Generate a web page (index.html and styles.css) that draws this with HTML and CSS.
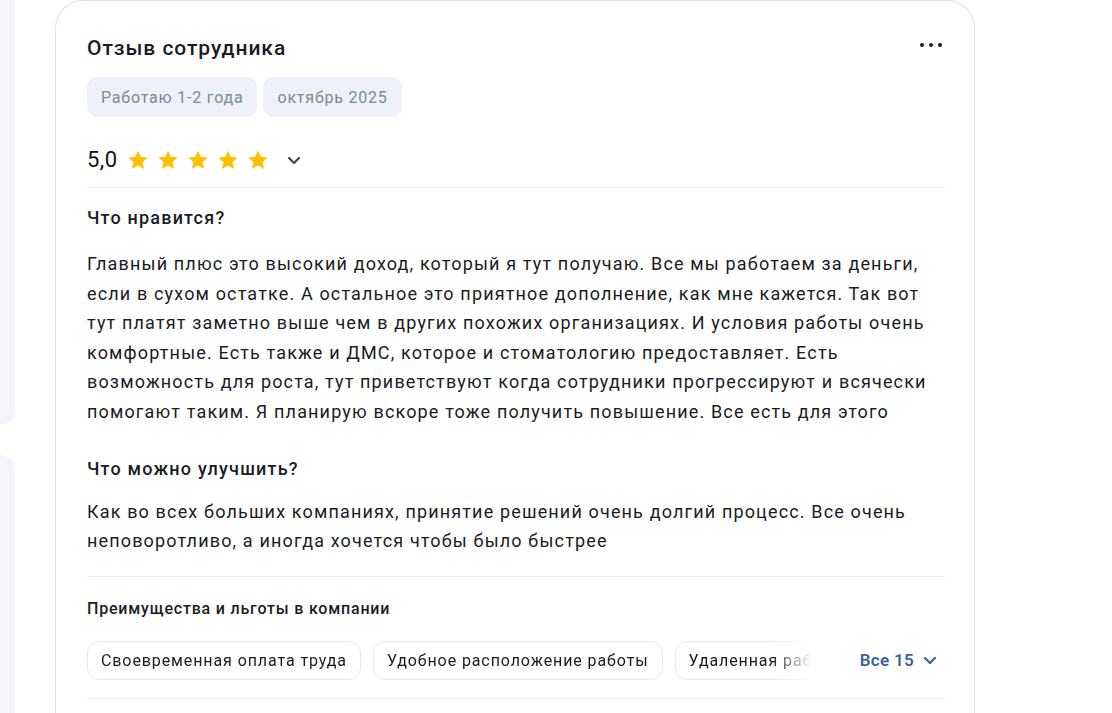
FILE: index.html
```html
<!DOCTYPE html>
<html lang="ru">
<head>
<meta charset="utf-8">
<link rel="stylesheet" href="styles.css">
</head>
<body>
<div class="page">
  <div class="side">
    <div class="side-panel p1"></div>
    <div class="side-panel p2"></div>
  </div>
  <div class="card">
    <div class="head">
      <h2 class="title">Отзыв сотрудника</h2>
      <div class="more"><span></span><span></span><span></span></div>
    </div>
    <div class="tags">
      <span class="tag">Работаю 1-2 года</span>
      <span class="tag">октябрь 2025</span>
    </div>
    <div class="rating">
      <span class="score">5,0</span>
      <div class="stars">
        <svg class="star" viewBox="0 0 24 24"><path d="M12 1.8l3.1 6.9 7.4.7-5.6 5 1.7 7.3L12 17.9l-6.6 3.8 1.7-7.3-5.6-5 7.4-.7z"/></svg>
        <svg class="star" viewBox="0 0 24 24"><path d="M12 1.8l3.1 6.9 7.4.7-5.6 5 1.7 7.3L12 17.9l-6.6 3.8 1.7-7.3-5.6-5 7.4-.7z"/></svg>
        <svg class="star" viewBox="0 0 24 24"><path d="M12 1.8l3.1 6.9 7.4.7-5.6 5 1.7 7.3L12 17.9l-6.6 3.8 1.7-7.3-5.6-5 7.4-.7z"/></svg>
        <svg class="star" viewBox="0 0 24 24"><path d="M12 1.8l3.1 6.9 7.4.7-5.6 5 1.7 7.3L12 17.9l-6.6 3.8 1.7-7.3-5.6-5 7.4-.7z"/></svg>
        <svg class="star" viewBox="0 0 24 24"><path d="M12 1.8l3.1 6.9 7.4.7-5.6 5 1.7 7.3L12 17.9l-6.6 3.8 1.7-7.3-5.6-5 7.4-.7z"/></svg>
      </div>
      <svg class="chev" viewBox="0 0 16 16"><path d="M3 6l5 5 5-5" fill="none" stroke="#3d3f45" stroke-width="2" stroke-linecap="round" stroke-linejoin="round"/></svg>
    </div>
    <div class="divider d1"></div>
    <h3 class="sub s1">Что нравится?</h3>
    <p class="text t1">Главный плюс это высокий доход, который я тут получаю. Все мы работаем за деньги, если в сухом остатке. А остальное это приятное дополнение, как мне кажется. Так вот тут платят заметно выше чем в других похожих организациях. И условия работы очень комфортные. Есть также и ДМС, которое и стоматологию предоставляет. Есть возможность для роста, тут приветствуют когда сотрудники прогрессируют и всячески помогают таким. Я планирую вскоре тоже получить повышение. Все есть для этого</p>
    <h3 class="sub s2">Что можно улучшить?</h3>
    <p class="text t2">Как во всех больших компаниях, принятие решений очень долгий процесс. Все очень неповоротливо, а иногда хочется чтобы было быстрее</p>
    <div class="divider d2"></div>
    <h4 class="perks-title">Преимущества и льготы в компании</h4>
    <div class="perks">
      <div class="chips">
        <span class="chip">Своевременная оплата труда</span>
        <span class="chip">Удобное расположение работы</span>
        <span class="chip">Удаленная работа</span>
      </div>
      <div class="all">Все 15
        <svg class="chev-blue" viewBox="0 0 16 16"><path d="M3 6l5 5 5-5" fill="none" stroke="#3a62a6" stroke-width="2.2" stroke-linecap="round" stroke-linejoin="round"/></svg>
      </div>
    </div>
    <div class="divider d3"></div>
  </div>
</div>
</body>
</html>
```

FILE: styles.css
```css
* { box-sizing: border-box; }
html, body { margin: 0; padding: 0; background: #ffffff; }
body {
  font-family: Roboto, "Noto Sans", "Liberation Sans", sans-serif;
  color: #1b1c1f;
  width: 1112px;
  height: 713px;
  overflow: hidden;
}
.page {
  display: flex;
  align-items: flex-start;
  height: 713px;
  overflow: hidden;
}
.side {
  width: 15px;
  flex: none;
  display: flex;
  flex-direction: column;
  gap: 30px;
  height: 713px;
}
.side-panel {
  background: #f4f5fa;
  width: 15px;
}
.p1 { height: 425px; border-radius: 0 0 15px 0; }
.p2 { flex: 1; border-radius: 0 15px 0 0; }
.card {
  margin-left: 40px;
  width: 920px;
  height: 713px;
  border: 1px solid #dde2ea;
  border-bottom: none;
  border-radius: 28px 28px 0 0;
  padding: 35px 29px 0 31px;
  flex: none;
  overflow: hidden;
}
.head {
  display: flex;
  align-items: center;
  justify-content: space-between;
  height: 24px;
}
.title {
  margin: 0;
  font-size: 21px;
  letter-spacing: 0.95px;
  line-height: 24px;
  font-weight: 500;
  color: #1b1c1f;
}
.more {
  display: flex;
  gap: 4.5px;
  padding-right: 3px;
  margin-top: -6px;
}
.more span {
  width: 4.5px;
  height: 4.5px;
  border-radius: 50%;
  background: #1b1c1f;
}
.tags {
  display: flex;
  gap: 6px;
  margin-top: 17px;
}
.tag {
  height: 40px;
  display: inline-flex;
  align-items: center;
  padding: 0 14px;
  background: #eef1f7;
  border-radius: 10px;
  color: #7b88a0;
  font-size: 16px;
  letter-spacing: 0.8px;
}
.rating {
  display: flex;
  align-items: center;
  height: 28px;
  margin-top: 29px;
}
.score {
  font-size: 22px;
  letter-spacing: 0.5px;
  line-height: 28px;
  font-weight: 400;
  color: #111;
}
.stars {
  display: flex;
  gap: 8px;
  margin-left: 9px;
}
.star {
  width: 22px;
  height: 22px;
  fill: #ffbf00;
}
.chev {
  width: 16px;
  height: 16px;
  margin-left: 17px;
}
.divider {
  height: 1px;
  background: #eef0f4;
}
.d1 { margin-top: 13px; }
.sub {
  margin: 0;
  font-size: 18px;
  letter-spacing: 1.2px;
  line-height: 24px;
  font-weight: 500;
}
.s1 { margin-top: 18px; }
.s2 { margin-top: 30px; }
.text {
  margin: 0;
  font-size: 18px;
  letter-spacing: 1.15px;
  line-height: 29.6px;
  color: #1b1c1f;
}
.t1 { margin-top: 19px; }
.t2 { margin-top: 16px; }
.d2 { margin-top: 20px; }
.perks-title {
  margin: 22px 0 0;
  font-size: 16px;
  letter-spacing: 0.8px;
  line-height: 20px;
  font-weight: 500;
}
.perks {
  display: flex;
  align-items: center;
  margin-top: 22px;
  height: 39px;
}
.chips {
  display: flex;
  gap: 12px;
  width: 725px;
  overflow: hidden;
  -webkit-mask-image: linear-gradient(to right, #000 685px, transparent 725px);
  mask-image: linear-gradient(to right, #000 685px, transparent 725px);
}
.chip {
  flex: none;
  height: 39px;
  display: inline-flex;
  align-items: center;
  padding: 0 13px;
  border: 1px solid #e6e9ef;
  border-radius: 12px;
  font-size: 16px;
  letter-spacing: 0.9px;
  color: #1b1c1f;
  white-space: nowrap;
}
.all {
  margin-left: auto;
  display: flex;
  align-items: center;
  gap: 8px;
  color: #3a62a6;
  font-size: 17px;
  letter-spacing: 0.3px;
  font-weight: 600;
  padding-right: 7px;
}
.chev-blue {
  width: 16px;
  height: 16px;
}
.d3 { margin-top: 18px; }
```
